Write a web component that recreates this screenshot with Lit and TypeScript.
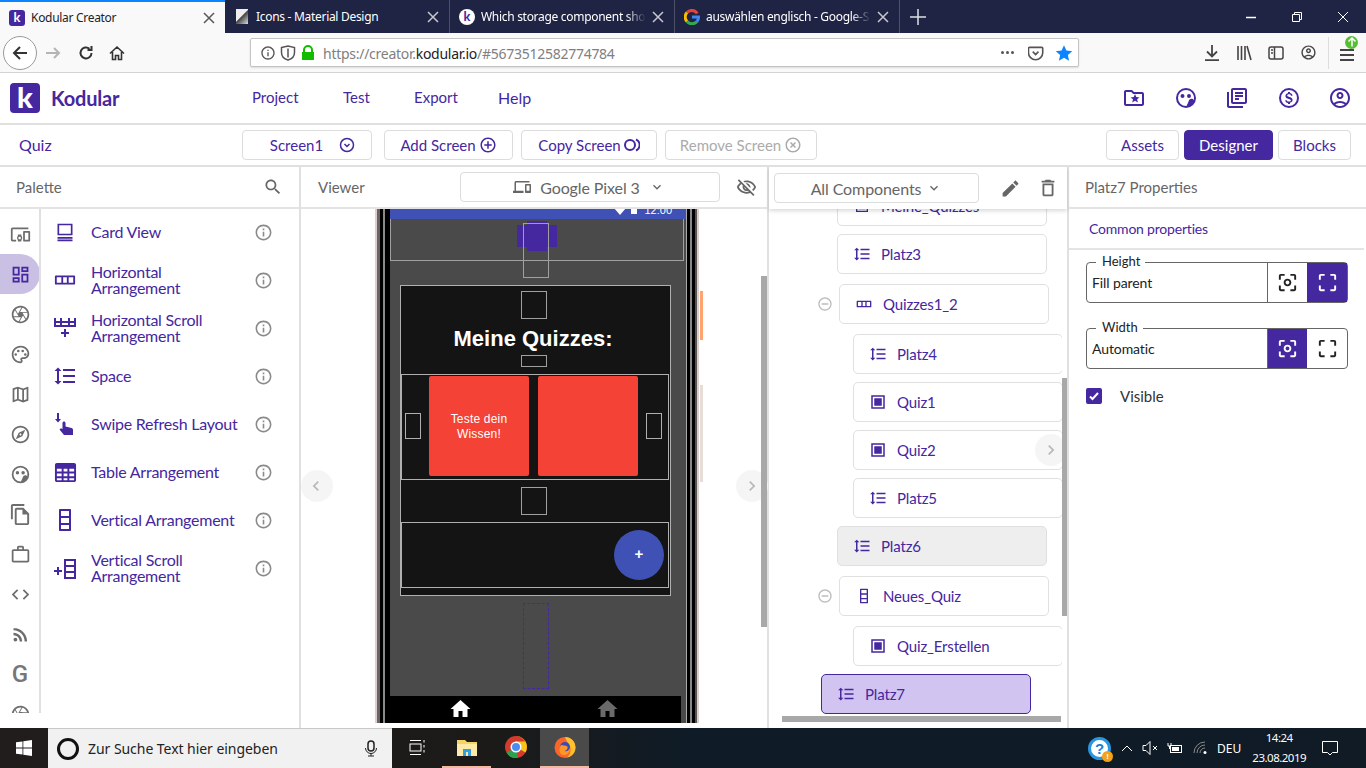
import { LitElement, html, css, svg } from "lit";
import { customElement } from "lit/decorators.js";

const P = {
  search: "M15.5 14h-.79l-.28-.27C15.41 12.59 16 11.11 16 9.5 16 5.91 13.09 3 9.5 3S3 5.91 3 9.5 5.91 16 9.5 16c1.61 0 3.09-.59 4.23-1.57l.27.28v.79l5 4.99L20.49 19l-4.99-5zm-6 0C7.01 14 5 11.99 5 9.5S7.01 5 9.5 5 14 7.01 14 9.5 11.99 14 9.5 14z",
  info: "M11 7h2v2h-2zm0 4h2v6h-2zm1-9C6.48 2 2 6.48 2 12s4.48 10 10 10 10-4.48 10-10S17.52 2 12 2zm0 18c-4.41 0-8-3.59-8-8s3.59-8 8-8 8 3.59 8 8-3.59 8-8 8z",
  edit: "M3 17.25V21h3.75L17.81 9.94l-3.75-3.75L3 17.25zM20.71 7.04c.39-.39.39-1.02 0-1.41l-2.34-2.34c-.39-.39-1.02-.39-1.41 0l-1.83 1.83 3.75 3.75 1.83-1.83z",
  trash: "M6 19c0 1.1.9 2 2 2h8c1.1 0 2-.9 2-2V7H6v12zM8 9h8v10H8V9zm7.5-5l-1-1h-5l-1 1H5v2h14V4z",
  more: "M16.59 8.59L12 13.17 7.41 8.59 6 10l6 6 6-6z",
  left: "M15.41 7.41L14 6l-6 6 6 6 1.41-1.41L10.83 12z",
  right: "M10 6L8.59 7.41 13.17 12l-4.58 4.59L10 18l6-6z",
  home: "M10 20v-6h4v6h5v-8h3L12 3 2 12h3v8z",
  account: "M12 2C6.48 2 2 6.48 2 12s4.48 10 10 10 10-4.48 10-10S17.52 2 12 2zM7.35 18.5C8.66 17.56 10.26 17 12 17s3.34.56 4.65 1.5c-1.31.94-2.91 1.5-4.65 1.5s-3.34-.56-4.65-1.5zm10.79-1.38C16.45 15.8 14.32 15 12 15s-4.45.8-6.14 2.12C4.7 15.73 4 13.95 4 12c0-4.42 3.58-8 8-8s8 3.58 8 8c0 1.95-.7 3.73-1.86 5.12zM12 6c-1.93 0-3.5 1.57-3.5 3.5S10.07 13 12 13s3.5-1.57 3.5-3.5S13.93 6 12 6zm0 5c-.83 0-1.5-.67-1.5-1.5S11.17 8 12 8s1.5.67 1.5 1.5S12.83 11 12 11z",
  folder: "M20 6h-8l-2-2H4c-1.1 0-2 .9-2 2v12c0 1.1.9 2 2 2h16c1.1 0 2-.9 2-2V8c0-1.1-.9-2-2-2zm0 12H4V6h5.17l2 2H20v10zM15.9 16.5l-.74-3.14 2.34-1.96-3.21-.28L13 8.1l-1.25 3.02-3.21.28 2.44 1.96-.74 3.14L13 14.8z",
  books: "M4 6H2v14c0 1.1.9 2 2 2h14v-2H4V6zm16-4H8c-1.1 0-2 .9-2 2v12c0 1.1.9 2 2 2h12c1.1 0 2-.9 2-2V4c0-1.1-.9-2-2-2zm0 14H8V4h12v12zM10 9h8v2h-8zm0 3h4v2h-4zm0-6h8v2h-8z",
  palette: "M12 22C6.49 22 2 17.51 2 12S6.49 2 12 2s10 4.04 10 9c0 3.31-2.69 6-6 6h-1.77c-.28 0-.5.22-.5.5 0 .12.05.23.13.33.41.47.64 1.06.64 1.67 0 1.38-1.12 2.5-2.5 2.5zm0-18c-4.41 0-8 3.59-8 8s3.59 8 8 8c.28 0 .5-.22.5-.5 0-.16-.08-.28-.14-.35-.41-.46-.63-1.05-.63-1.65 0-1.38 1.12-2.5 2.5-2.5H16c2.21 0 4-1.79 4-4 0-3.86-3.59-7-8-7zM6.5 13.5a1.5 1.5 0 1 1 0-3 1.5 1.5 0 0 1 0 3zm3-4a1.5 1.5 0 1 1 0-3 1.5 1.5 0 0 1 0 3zm5 0a1.5 1.5 0 1 1 0-3 1.5 1.5 0 0 1 0 3zm3 4a1.5 1.5 0 1 1 0-3 1.5 1.5 0 0 1 0 3z",
  map: "M20.5 3l-.16.03L15 5.1 9 3 3.36 4.9c-.21.07-.36.25-.36.48V20.5c0 .28.22.5.5.5l.16-.03L9 18.9l6 2.1 5.64-1.9c.21-.07.36-.25.36-.48V3.5c0-.28-.22-.5-.5-.5zM10 5.47l4 1.4v11.66l-4-1.4V5.47zm-5 .99l3-1.01v11.7l-3 1.16V6.46zm14 11.08l-3 1.01V6.86l3-1.16v11.84z",
  explore: "M12 2C6.48 2 2 6.48 2 12s4.48 10 10 10 10-4.48 10-10S17.52 2 12 2zm0 18c-4.41 0-8-3.59-8-8s3.59-8 8-8 8 3.59 8 8-3.59 8-8 8zm-5.5-2.5l7.51-3.49L17.5 6.5 9.99 9.99 6.5 17.5zm5.5-6.6c.61 0 1.1.49 1.1 1.1s-.49 1.1-1.1 1.1-1.1-.49-1.1-1.1.49-1.1 1.1-1.1z",
  copy: "M16 1H4c-1.1 0-2 .9-2 2v14h2V3h12V1zm-1 4H8c-1.1 0-1.99.9-1.99 2L6 21c0 1.1.89 2 1.99 2H19c1.1 0 2-.9 2-2V11l-6-6zM8 21V7h6v5h5v9H8z",
  work: "M14 6V4h-4v2h4zM4 8v11h16V8H4zm16-2c1.11 0 2 .89 2 2v11c0 1.11-.89 2-2 2H4c-1.11 0-2-.89-2-2l.01-11c0-1.11.88-2 1.99-2h4V4c0-1.11.89-2 2-2h4c1.11 0 2 .89 2 2v2h4z",
  code: "M9.4 16.6L4.8 12l4.6-4.6L8 6l-6 6 6 6 1.4-1.4zm5.2 0l4.6-4.6-4.6-4.6L16 6l6 6-6 6-1.4-1.4z",
  rss: "M8.36 17.82a2.18 2.18 0 1 1-4.36 0 2.18 2.18 0 0 1 4.36 0zM4 4.44v2.83c7.03 0 12.73 5.7 12.73 12.73h2.83c0-8.59-6.97-15.56-15.56-15.56zm0 5.66v2.83c3.9 0 7.07 3.17 7.07 7.07h2.83c0-5.47-4.43-9.9-9.9-9.9z",
  camera: "M14.25 2.26l-.08-.04-.01.02C13.46 2.09 12.74 2 12 2 6.48 2 2 6.48 2 12s4.48 10 10 10 10-4.48 10-10c0-4.75-3.31-8.72-7.75-9.74zM19.41 9h-7.99l2.71-4.7c2.4.66 4.35 2.42 5.28 4.7zM13.1 4.08L10.27 9l-1.15 2L6.4 6.3C7.84 4.88 9.82 4 12 4c.37 0 .74.03 1.1.08zM5.7 7.09L8.54 12l1.15 2H4.26C4.1 13.36 4 12.69 4 12c0-1.85.64-3.55 1.7-4.91zM4.59 15h7.98l-2.71 4.7c-2.4-.67-4.34-2.42-5.27-4.7zm6.31 4.91L14.89 13l2.72 4.7C16.160 19.120 14.180 20 12 20c-.38 0-.74-.04-1.100-.09zm7.400-3l-4-6.910h5.430c.170.640.270 1.310.270 2 0 1.850-.640 3.550-1.700 4.910z",
  other: "M3 6h18V4H3c-1.1 0-2 .9-2 2v12c0 1.1.9 2 2 2h4v-2H3V6zm10 6H9v1.78c-.61.55-1 1.33-1 2.22s.39 1.67 1 2.22V20h4v-1.78c.61-.55 1-1.34 1-2.22s-.39-1.67-1-2.22V12zm-2 5.5c-.83 0-1.5-.67-1.5-1.5s.67-1.5 1.5-1.5 1.5.67 1.5 1.5-.67 1.5-1.5 1.5zM22 8h-6c-.5 0-1 .5-1 1v10c0 .5.5 1 1 1h6c.5 0 1-.5 1-1V9c0-.5-.5-1-1-1zm-1 10h-4v-8h4v8z",
  dash: "M19 5v2h-4V5h4M9 5v6H5V5h4m10 8v6h-4v-6h4M9 17v2H5v-2h4M21 3h-8v6h8V3zM11 3H3v10h8V3zm10 8h-8v10h8V11zm-10 4H3v6h8v-6z",
  eyeOff: "M12 6c3.79 0 7.17 2.13 8.82 5.5-.59 1.22-1.42 2.27-2.41 3.12l1.41 1.41c1.39-1.23 2.49-2.77 3.18-4.53C21.27 7.11 17 4 12 4c-1.27 0-2.49.2-3.64.57l1.65 1.65C10.66 6.09 11.32 6 12 6zm-1.07 1.14L13 9.21c.57.25 1.03.71 1.28 1.28l2.07 2.07c.08-.34.14-.7.14-1.07C16.5 9.01 14.48 7 12 7c-.37 0-.72.05-1.07.14zM2.01 3.87l2.68 2.68C3.06 7.83 1.77 9.53 1 11.5 2.73 15.89 7 19 12 19c1.52 0 2.98-.29 4.32-.82l3.42 3.42 1.41-1.41L3.42 2.45 2.01 3.87zm7.5 7.5l2.61 2.61c-.04.01-.08.02-.12.02-1.38 0-2.5-1.12-2.5-2.5 0-.05.01-.08.01-.13zm-3.4-3.4l1.75 1.75c-.23.55-.36 1.15-.36 1.78 0 2.48 2.02 4.5 4.5 4.5.63 0 1.23-.13 1.77-.36l.98.98c-.88.24-1.8.38-2.75.38-3.79 0-7.17-2.13-8.82-5.5.7-1.43 1.72-2.61 2.93-3.53z",
  devices: "M4 6h18V4H4c-1.1 0-2 .9-2 2v11H0v3h14v-3H4V6zm19 2h-6c-.55 0-1 .45-1 1v10c0 .55.45 1 1 1h6c.55 0 1-.45 1-1V9c0-.55-.45-1-1-1zm-1 9h-4v-7h4v7z",
  focus: "M5 15H3v4c0 1.1.9 2 2 2h4v-2H5v-4zM5 5h4V3H5c-1.1 0-2 .9-2 2v4h2V5zm14-2h-4v2h4v4h2V5c0-1.1-.9-2-2-2zm0 16h-4v2h4c1.1 0 2-.9 2-2v-4h-2v4zM12 8c-2.21 0-4 1.79-4 4s1.79 4 4 4 4-1.79 4-4-1.79-4-4-4zm0 6c-1.1 0-2-.9-2-2s.9-2 2-2 2 .9 2 2-.9 2-2 2z",
  full: "M5 15H3v4c0 1.1.9 2 2 2h4v-2H5v-4zM5 5h4V3H5c-1.1 0-2 .9-2 2v4h2V5zm14-2h-4v2h4v4h2V5c0-1.1-.9-2-2-2zm0 16h-4v2h4c1.1 0 2-.9 2-2v-4h-2v4z",
  addCircle: "M13 7h-2v4H7v2h4v4h2v-4h4v-2h-4V7zm-1-5C6.48 2 2 6.48 2 12s4.48 10 10 10 10-4.48 10-10S17.52 2 12 2zm0 18c-4.41 0-8-3.59-8-8s3.59-8 8-8 8 3.59 8 8-3.59 8-8 8z",
  xCircle: "M14.59 8L12 10.59 9.41 8 8 9.41 10.59 12 8 14.59 9.41 16 12 13.41 14.59 16 16 14.59 13.41 12 16 9.41 14.59 8zM12 2C6.47 2 2 6.47 2 12s4.47 10 10 10 10-4.47 10-10S17.53 2 12 2zm0 18c-4.41 0-8-3.59-8-8s3.59-8 8-8 8 3.59 8 8-3.59 8-8 8z",
  minusCircle: "M7 11v2h10v-2H7zm5-9C6.48 2 2 6.48 2 12s4.48 10 10 10 10-4.48 10-10S17.52 2 12 2zm0 18c-4.41 0-8-3.59-8-8s3.59-8 8-8 8 3.59 8 8-3.59 8-8 8z",
  space: "M6 7h2.5L5 3.5 1.5 7H4v10H1.5L5 20.5 8.5 17H6V7zm4-2v2h12V5H10zm0 14h12v-2H10v2zm0-6h12v-2H10v2z",
  card: "M3 2h18v14H3V2zm2 2v10h14V4H5zM3 18h18v2H3v-2zm0 3h18v2H3v-2z",
  horiz: "M2 7h20c.6 0 1 .4 1 1v8c0 .6-.4 1-1 1H2c-.6 0-1-.4-1-1V8c0-.6.4-1 1-1zm1 2v6h5V9H3zm7 0v6h4V9h-4zm6 0v6h5V9h-5z",
  hscroll: "M1 2h2v3h4V2h2v3h6V2h2v3h4V2h2v9H1V2zm2 5v2h4V7H3zm6 0v2h6V7H9zm8 0v2h4V7h-4zM11 13h2v3h3v2h-3v3h-2v-3H8v-2h3v-3z",
  swipe: "M4 1h2v6h2l-3 3.4L2 7h2V1zM11 9.5c.8 0 1.5.7 1.5 1.5v3.4l6 1.6c1 .3 1.5 1 1.5 2v5h-9L6.500 17.500l1.400-1.300L9.500 17V11c0-.8.700-1.500 1.500-1.500z",
  table: "M3 2h18c1.100 0 2 .9 2 2v16c0 1.100-.9 2-2 2H3c-1.100 0-2-.9-2-2V4c0-1.100.9-2 2-2zm0 6v3h5V8H3zm7 0v3h4V8h-4zm6 0v3h5V8h-5zM3 13v3h5v-3H3zm7 0v3h4v-3h-4zm6 0v3h5v-3h-5zM3 18v2h5v-2H3zm7 0v2h4v-2h-4zm6 0v2h5v-2h-5z",
  vert: "M7 1h10c.6 0 1 .4 1 1v20c0 .6-.4 1-1 1H7c-.6 0-1-.4-1-1V2c0-.6.4-1 1-1zm1 2v5h8V3H8zm0 7v5h8v-5H8zm0 7v4h8v-4H8z",
  vscroll: "M11 3h12v20H11V3zm2 2v4h8V5h-8zm0 6v4h8v-4h-8zm0 6v4h8v-4h-8zM4 11h2v3h3v2H6v3H4v-3H1v-2h3v-3z",
  button: "M3 3h18v18H3V3zm2 2v14h14V5H5zm2 2h10v10H7V7z",
  face: "M12 2a10 10 0 1 0 0 20 10 10 0 0 0 0-20zm0 2a8 8 0 0 1 7.700 10.200c-.4-.900-1.300-1.400-2.200-1.400-1.300 0-2.300.9-2.700 2-.5 1.500-1.300 3.200-2.300 5.100-.2 0-.3.100-.5.100a8 8 0 0 1 0-16zM8.500 8a2 2 0 1 0 0 4 2 2 0 0 0 0-4zm6.500 0a2 2 0 1 0 0 4 2 2 0 0 0 0-4z",
  dollarCircle: "M12 2a10 10 0 1 0 0 20 10 10 0 0 0 0-20zm0 2a8 8 0 1 1 0 16 8 8 0 0 1 0-16zm-1 2v1.300c-1.500.3-2.600 1.300-2.600 2.700 0 1.700 1.400 2.400 3.300 2.900 1.700.4 2.100.9 2.100 1.500 0 .5-.4 1.200-1.900 1.200-1.400 0-2-.6-2.100-1.400H8.200c.1 1.600 1.200 2.500 2.800 2.800V18h2v-1.300c1.500-.3 2.600-1.100 2.600-2.600 0-2-1.700-2.700-3.300-3.100-1.600-.4-2.100-.8-2.100-1.400 0-.7.700-1.300 1.900-1.300 1.300 0 1.700.6 1.800 1.400h1.600c-.1-1.200-.8-2.300-2.500-2.700V6h-2z",
};

const ic = (d: string, size = 24, cls = "") =>
  html`<svg class=${cls} width=${size} height=${size} viewBox="0 0 24 24" fill="currentColor"><path d=${d}></path></svg>`;

const strokeIc = (body: unknown, w: number, h: number, cls = "") =>
  html`<svg class=${cls} width=${w} height=${h} viewBox="0 0 ${w} ${h}" fill="none" stroke="currentColor" stroke-width="1.500">${body}</svg>`;

const RAIL = [P.other, P.dash, P.camera, P.palette, P.map, P.explore, P.face, P.copy, P.work, P.code, P.rss];

const PALETTE = [
  { icon: P.card, size: 20, label: ["Card View"] },
  { icon: P.horiz, size: 22, label: ["Horizontal", "Arrangement"] },
  { icon: P.hscroll, size: 24, label: ["Horizontal Scroll", "Arrangement"] },
  { icon: P.space, size: 24, label: ["Space"] },
  { icon: P.swipe, size: 24, label: ["Swipe Refresh Layout"] },
  { icon: P.table, size: 23, label: ["Table Arrangement"] },
  { icon: P.vert, size: 24, label: ["Vertical Arrangement"] },
  { icon: P.vscroll, size: 24, label: ["Vertical Scroll", "Arrangement"] },
];

const TREE = [
  { name: "Meine_Quizzes", icon: P.button, lv: "l1", icSize: 16 },
  { name: "Platz3", icon: P.space, lv: "l1", icSize: 18 },
  { name: "Quizzes1_2", icon: P.horiz, lv: "head", icSize: 16 },
  { name: "Platz4", icon: P.space, lv: "l2", icSize: 18 },
  { name: "Quiz1", icon: P.button, lv: "l2", icSize: 18 },
  { name: "Quiz2", icon: P.button, lv: "l2", icSize: 18 },
  { name: "Platz5", icon: P.space, lv: "l2", icSize: 18 },
  { name: "Platz6", icon: P.space, lv: "l1 hover", icSize: 18 },
  { name: "Neues_Quiz", icon: P.vert, lv: "head", icSize: 16 },
  { name: "Quiz_Erstellen", icon: P.button, lv: "l2", icSize: 18 },
  { name: "Platz7", icon: P.space, lv: "l0 picked", icSize: 18 },
];

@customElement("app-root")
export class AppRoot extends LitElement {
  private tabs() {
    const tabs = [
      { title: "Kodular Creator", fav: html`<span class="fav-k">k</span>`, on: true },
      { title: "Icons - Material Design", fav: html`<span class="fav-md"></span>` },
      { title: "Which storage component sho", fav: html`<span class="fav-k round">k</span>` },
      {
        title: "auswählen englisch - Google-S",
        fav: html`<svg width="16" height="16" viewBox="0 0 16 16" fill="none" stroke-width="3" class="fav-g">
          <path d="M13.200 4.500A6.500 6.500 0 0 0 3 3.500" stroke="#ea4335"></path>
          <path d="M3 3.500a6.500 6.500 0 0 0 0 9" stroke="#fbbc05"></path>
          <path d="M3 12.500a6.500 6.500 0 0 0 10 0" stroke="#34a853"></path>
          <path d="M13 12.500A6.500 6.500 0 0 0 14.500 8H8" stroke="#4285f4"></path>
        </svg>`,
      },
    ];
    return html`<div class="tabs">
      ${tabs.map(
        (t) => html`<div class="tab ${t.on ? "on" : ""}">
          ${t.fav}<span class="tab-title">${t.title}</span>
          ${strokeIc(svg`<path d="M1 1l10 10M11 1L1 11"></path>`, 12, 12)}
        </div>`
      )}
      <div class="new-tab">${strokeIc(svg`<path d="M8 0v16M0 8h16"></path>`, 16, 16)}</div>
      <div class="win">
        ${strokeIc(svg`<path d="M0 5.500h10"></path>`, 10, 10)}
        ${strokeIc(svg`<path d="M.5 2.500h7v7h-7zM2.500 2.500V.5h7v7H7.500" stroke-width="1"></path>`, 10, 10)}
        ${strokeIc(svg`<path d="M0 0l10 10M10 0L0 10" stroke-width="1"></path>`, 10, 10)}
      </div>
    </div>`;
  }

  private toolbar() {
    return html`<div class="toolbar">
      <div class="back">${strokeIc(svg`<path d="M15 8H2M8 2L2 8l6 6" stroke-width="2"></path>`, 16, 16)}</div>
      ${strokeIc(svg`<path d="M1 8h13M9 3l5 5-5 5" stroke-width="2"></path>`, 16, 16, "fwd")}
      ${strokeIc(svg`<path d="M13.500 8A5.500 5.500 0 1 1 11.500 3.700M13.500 1v4h-4" stroke-width="2"></path>`, 16, 16, "tb-ic reload")}
      ${strokeIc(svg`<path d="M1 8.500L8 2l7 6.500M3.500 7v7.500h3v-4h3v4h3V7" stroke-width="1.600"></path>`, 16, 16, "tb-ic homeb")}
      <div class="url">
        ${ic(P.info, 16, "u-info")}
        ${strokeIc(svg`<path d="M1.500 2.500L8 1l6.500 1.500v5C14.500 11 12 14 8 15c-4-1-6.500-4-6.500-7.500zM8 3.500v9" stroke-width="1.500"></path>`, 16, 16, "u-shield")}
        <svg class="u-lock" width="14" height="16" viewBox="0 0 14 16" fill="#12bc00"><path d="M2 7V5a5 5 0 0 1 10 0v2h1v8H1V7h1zm2 0h6V5a3 3 0 0 0-6 0v2z"></path></svg>
        <span class="url-text">https://creator.<b>kodular.io</b>/#5673512582774784</span>
        <span class="u-dots"><i></i><i></i><i></i></span>
        ${strokeIc(svg`<path d="M1.500 2h13c.5 0 1 .4 1 1v4.500a7.500 7.500 0 0 1-15 0V3c0-.6.5-1 1-1zM5 6.500l3 3 3-3" stroke-width="1.700" transform="translate(0 .5) scale(.95)"></path>`, 16, 16, "u-pocket")}
        <svg class="u-star" width="18" height="18" viewBox="0 0 24 24" fill="#0a84ff"><path d="M12 1.500l3.200 7.200 7.800.8-5.900 5.200 1.700 7.700L12 18.400l-6.800 4 1.700-7.700L1 9.500l7.800-.8z"></path></svg>
      </div>
      <div class="tb-right">
        ${strokeIc(svg`<path d="M8 0v11M3 6.500L8 11.500 13 6.500M1 15.200h14" stroke-width="1.800"></path>`, 16, 16)}
        ${strokeIc(svg`<path d="M2 1v14M5.500 1v14M9 1v14M11 1l4 14" stroke-width="1.600"></path>`, 16, 16)}
        ${strokeIc(svg`<rect x="1" y="2" width="14" height="12" rx="2"></rect><path d="M6.500 2v12M3 5h2M3 8h2" stroke-width="1.500"></path>`, 16, 16)}
        ${ic(P.account, 17)}
        <span class="tb-sep"></span>
        <span class="menu">
          ${strokeIc(svg`<path d="M1 3h14M1 8h14M1 13h14" stroke-width="1.800"></path>`, 16, 16)}
          <span class="badge">
            <svg width="10" height="10" viewBox="0 0 10 10" fill="none" stroke="#fff" stroke-width="1.500"><path d="M5 9.500V1M1.500 4.500L5 1l3.500 3.500"></path></svg>
          </span>
        </span>
      </div>
    </div>`;
  }

  private appHeader() {
    return html`<header class="app-head">
      <div class="logo">k</div>
      <div class="brand">Kodular</div>
      <nav class="nav">
        <span class="n1">Project</span><span class="n2">Test</span><span class="n3">Export</span><span class="n4">Help</span>
      </nav>
      <div class="head-icons">
        ${ic(P.folder, 24)} ${ic(P.face, 24)} ${ic(P.books, 24)} ${ic(P.dollarCircle, 24)} ${ic(P.account, 24)}
      </div>
    </header>`;
  }

  private subBar() {
    return html`<div class="sub">
      <span class="proj">Quiz</span>
      <button class="btn b-screen">
        Screen1
        ${strokeIc(svg`<circle cx="8" cy="8" r="6.500"></circle><path d="M5.500 7l2.500 2.500L10.500 7"></path>`, 16, 16)}
      </button>
      <button class="btn b-add">Add Screen ${ic(P.addCircle, 18)}</button>
      <button class="btn b-copy">
        Copy Screen
        ${strokeIc(svg`<circle cx="6" cy="8" r="5" stroke-width="2"></circle><path d="M12 2.500a6 6 0 0 1 0 11" stroke-width="2"></path>`, 16, 16)}
      </button>
      <button class="btn b-remove">Remove Screen ${ic(P.xCircle, 18)}</button>
      <span class="views">
        <button class="btn v1">Assets</button>
        <button class="btn v2">Designer</button>
        <button class="btn v3">Blocks</button>
      </span>
    </div>`;
  }

  private palette() {
    return html`<section class="palette">
      <div class="p-head">Palette ${ic(P.search, 20)}</div>
      <div class="p-body">
        <div class="rail">
          ${RAIL.map(
            (d, i) => html`<div class="rail-item ${i === 1 ? "on" : ""}">${ic(d, i === 7 ? 23 : 21)}</div>`
          )}
          <div class="rail-item g">G</div>
          <div class="rail-item">${ic(P.camera, 21)}</div>
        </div>
        <div class="plist">
          ${PALETTE.map(
            (p) => html`<div class="pitem">
              <span class="pi">${ic(p.icon, p.size)}</span>
              <span class="pl">${p.label.map((l) => html`<span>${l}</span>`)}</span>
              ${ic(P.info, 19, "pinfo")}
            </div>`
          )}
        </div>
      </div>
    </section>`;
  }

  private phone() {
    const homeIcon = (cls: string) => ic(P.home, 24, cls);
    return html`<div class="phone">
      <span class="side s1"></span><span class="side s2"></span>
      <div class="screen">
        <div class="status">
          <svg width="12" height="7" viewBox="0 0 12 7" fill="#fff"><path d="M0 0h12L6 7z"></path></svg>
          <span class="batt"></span>
          <span class="clock">12:00</span>
        </div>
        <div class="top-box">
          <span class="mk-wing"></span><span class="mk-body"></span><span class="mk-outline"></span>
        </div>
        <div class="main">
          <div class="hold h28"></div>
          <div class="title">Meine Quizzes:</div>
          <div class="hold h12"></div>
          <div class="row row1">
            <span class="sbox"></span>
            <div class="qcard">Teste dein<br />Wissen!</div>
            <div class="qcard c2"></div>
            <span class="sbox"></span>
          </div>
          <div class="hold h28 gap"></div>
          <div class="row row2"><div class="fab">+</div></div>
        </div>
        <div class="dashed"></div>
        <div class="bottom-nav">${homeIcon("hw")}${homeIcon("hg")}</div>
      </div>
    </div>`;
  }

  private viewer() {
    return html`<section class="viewer">
      <div class="v-head">
        <span class="ptitle">Viewer</span>
        <div class="select device">${ic(P.devices, 18)}<span>Google Pixel 3</span>${ic(P.more, 16)}</div>
        ${ic(P.eyeOff, 21, "eye")}
      </div>
      <div class="v-body">
        ${this.phone()}
        <div class="arrow a-l">${ic(P.left, 20)}</div>
        <div class="arrow a-r">${ic(P.right, 20)}</div>
        <div class="vbar"></div>
      </div>
    </section>`;
  }

  private tree() {
    return html`<section class="tree">
      <div class="t-head">
        <div class="select all"><span>All Components</span>${ic(P.more, 16)}</div>
        ${ic(P.edit, 21, "t-edit")} ${ic(P.trash, 22, "t-del")}
      </div>
      <div class="t-body">
        <div class="t-list">
          ${TREE.map(
            (n) => html`<div class="node ${n.lv}">
              ${n.lv === "head" ? ic(P.minusCircle, 16, "collapse") : ""}
              <span class="nic">${ic(n.icon, n.icSize)}</span><span>${n.name}</span>
            </div>`
          )}
        </div>
        <div class="arrow a-t">${ic(P.right, 20)}</div>
        <div class="tbar-v"></div>
        <div class="tbar-h"></div>
      </div>
    </section>`;
  }

  private props() {
    const field = (label: string, value: string, active: number) => html`<div class="field">
      <span class="legend">${label}</span>
      <span class="fval">${value}</span>
      <span class="fbtn first ${active === 0 ? "active" : ""}">${ic(P.focus, 23)}</span>
      <span class="fbtn ${active === 1 ? "active" : ""}">${ic(P.full, 23)}</span>
    </div>`;
    return html`<section class="props">
      <div class="pr-head">Platz7 Properties</div>
      <div class="pr-tab">Common properties</div>
      <div class="pr-body">
        ${field("Height", "Fill parent", 1)} ${field("Width", "Automatic", 0)}
        <label class="check">
          <span class="box">
            <svg width="12" height="12" viewBox="0 0 12 12" fill="none" stroke="#fff" stroke-width="2"><path d="M2 6.500l2.500 2.500L10 3"></path></svg>
          </span>
          Visible
        </label>
      </div>
    </section>`;
  }

  private taskbar() {
    return html`<footer class="taskbar">
      <div class="start">
        <svg width="16" height="16" viewBox="0 0 16 16" fill="#fff"><path d="M0 2.300l6.500-.9v6.200H0zM7.300 1.300L16 0v7.600H7.300zM0 8.400h6.500v6.200L0 13.700zM7.300 8.400H16V16l-8.700-1.300z"></path></svg>
      </div>
      <div class="tsearch">
        <span class="cortana"></span>
        <span class="ts-text">Zur Suche Text hier eingeben</span>
        ${strokeIc(svg`<rect x="5" y="1" width="6" height="10" rx="3"></rect><path d="M2.500 8a5.500 5.500 0 0 0 11 0M8 13.500V16M5 16h6" stroke-width="1"></path>`, 16, 17, "mic")}
      </div>
      <div class="apps">
        <span class="app taskview">
          ${strokeIc(svg`<rect x="2" y="5" width="11" height="7" stroke-width="1"></rect><path d="M2 1.500h11M2 15.500h11M16 1v2.500M16 6v2.500M16 11v2.500" stroke-width="1"></path>`, 18, 17)}
        </span>
        <span class="app run">
          <svg width="22" height="20" viewBox="0 0 22 20">
            <path d="M1 3h8l2 2h10v14H1z" fill="#f6d365"></path>
            <path d="M1 7h20v12H1z" fill="#ffe9a8"></path>
            <path d="M7 12h8v7H7z" fill="#2f9fe0"></path>
            <path d="M10 15h2v4h-2z" fill="#ffe9a8"></path>
          </svg>
        </span>
        <span class="app">
          <svg width="24" height="24" viewBox="0 0 24 24">
            <circle cx="12" cy="12" r="11" fill="#d33b2c"></circle>
            <path d="M12 12L2.500 17.500A11 11 0 0 0 14 22.800z" fill="#2e9e4f"></path>
            <path d="M12 1a11 11 0 0 1 9.500 16.500L12 12V6.500h9A11 11 0 0 0 12 1z" fill="#f5c518"></path>
            <circle cx="12" cy="12" r="5.500" fill="#fff"></circle>
            <circle cx="12" cy="12" r="4" fill="#4a8df0"></circle>
          </svg>
        </span>
        <span class="app ff run">
          <svg width="24" height="24" viewBox="0 0 24 24">
            <circle cx="12" cy="12.500" r="10.500" fill="#f8662c"></circle>
            <path d="M12 2c6 0 10.500 4.500 10.500 10.500 0 5-3.500 9-8.500 10C18 19 19 13 15.500 9 14.500 7 13 5 12 2z" fill="#ffc12e"></path>
            <circle cx="12" cy="12" r="5" fill="#3a4cb8"></circle>
            <path d="M8 10c2 .5 4 0 6.500 1.500.5 2.500-1 4-3 4.500 2.500 1 5-1 5.500-3 .5 4-3 7.500-6.500 7C7 19.500 5 15 8 10z" fill="#ff9628"></path>
          </svg>
        </span>
      </div>
      <div class="tray">
        <span class="help">?<i>!</i></span>
        ${strokeIc(svg`<path d="M1 8l5-5 5 5" stroke-width="1"></path>`, 12, 10, "t1")}
        ${strokeIc(svg`<path d="M1 5.500h3l4-4v13l-4-4H1zM11 6l4 4M15 6l-4 4" stroke-width="1"></path>`, 16, 16, "t2")}
        <svg class="t3" width="16" height="12" viewBox="0 0 16 12" fill="none" stroke="#fff"><rect x="3.500" y="3.500" width="11" height="7"></rect><rect x="5" y="5" width="7" height="4" fill="#fff" stroke="none"></rect><path d="M1 1v3h3V1M2.500 4v3"></path></svg>
        <svg class="t4" width="16" height="14" viewBox="0 0 16 14" fill="none" stroke="#8a8a8a"><path d="M1 12a11 11 0 0 1 11-11M4 12a8 8 0 0 1 8-8M7 12a5 5 0 0 1 5-5"></path><circle cx="12" cy="11.500" r="1.500" fill="#fff" stroke="none"></circle></svg>
        <span class="lang">DEU</span>
        <span class="time">14:24<br />23.08.2019</span>
        ${strokeIc(svg`<path d="M.5 1.500h15v11h-5L8 15l-2.500-2.500h-5z" stroke-width="1"></path>`, 16, 16, "t5")}
      </div>
    </footer>`;
  }

  render() {
    return html`
      ${this.tabs()} ${this.toolbar()} ${this.appHeader()} ${this.subBar()}
      <main class="panels">${this.palette()} ${this.viewer()} ${this.tree()} ${this.props()}</main>
      ${this.taskbar()}
    `;
  }

  static styles = css`
    :host {
      display: flex;
      flex-direction: column;
      width: 1366px;
      height: 768px;
      overflow: hidden;
      background: #fff;
      font-family: "Lato", "Liberation Sans", sans-serif;
      color: #4527a0;
    }
    * {
      box-sizing: border-box;
    }
    svg {
      flex: none;
      display: block;
    }
    button {
      font: inherit;
    }

    .tabs {
      height: 33px;
      flex: none;
      display: flex;
      background: #1f2344;
      font-family: "Noto Sans", sans-serif;
      font-size: 12px;
      color: #fff;
    }
    .tab {
      width: 225px;
      display: flex;
      align-items: center;
      gap: 6px;
      padding: 0 10px 0 9px;
      border-right: 1px solid #4c5068;
    }
    .tab svg:last-child {
      opacity: 0.75;
      margin-left: auto;
    }
    .tab.on {
      background: #f9f9fa;
      color: #222;
      border-top: 2px solid #0a84ff;
      border-right: 0;
    }
    .tab-title {
      flex: 1;
      white-space: nowrap;
      overflow: hidden;
      letter-spacing: -0.3px;
      -webkit-mask-image: linear-gradient(90deg, #000 88%, transparent);
      mask-image: linear-gradient(90deg, #000 88%, transparent);
    }
    .tab:nth-child(1) .tab-title,
    .tab:nth-child(2) .tab-title {
      -webkit-mask-image: none;
      mask-image: none;
    }
    .fav-k {
      width: 16px;
      height: 16px;
      flex: none;
      border-radius: 3px;
      background: #4527a0;
      color: #fff;
      font: 700 13px/15px "Lato", sans-serif;
      text-align: center;
    }
    .fav-k.round {
      border-radius: 50%;
      background: #fff;
      color: #4527a0;
    }
    .fav-md {
      width: 12px;
      height: 15px;
      flex: none;
      margin: 0 2px;
      background: linear-gradient(135deg, #eee 45%, #444 50%, #ddd);
    }
    .new-tab {
      width: 36px;
      display: flex;
      align-items: center;
      justify-content: center;
      opacity: 0.85;
    }
    .win {
      margin-left: auto;
      display: flex;
      align-items: center;
    }
    .win svg {
      margin: 0 18px;
    }

    .toolbar {
      height: 40px;
      flex: none;
      display: flex;
      align-items: center;
      background: #f9f9fa;
      border-bottom: 1px solid #d4d4d4;
      color: #333;
      padding-left: 3px;
    }
    .back {
      width: 34px;
      height: 34px;
      border: 1px solid #9a9a9a;
      border-radius: 50%;
      display: flex;
      align-items: center;
      justify-content: center;
      background: #fff;
    }
    .fwd {
      margin-left: 8px;
      color: #b5b5b5;
    }
    .reload {
      margin-left: 17px;
    }
    .homeb {
      margin-left: 15px;
    }
    .url {
      margin-left: 125px;
      width: 829px;
      height: 29px;
      background: #fff;
      border: 1px solid #c4c4c4;
      border-radius: 2px;
      box-shadow: 0 1px 2px rgba(0, 0, 0, 0.12);
      display: flex;
      align-items: center;
      padding-left: 9px;
      color: #555;
    }
    .u-shield {
      margin-left: 4px;
    }
    .u-lock {
      margin-left: 5px;
    }
    .url-text {
      margin-left: 8px;
      padding-top: 2px;
      font: 14px "Noto Sans", sans-serif;
      letter-spacing: -0.27px;
      color: #808080;
      white-space: nowrap;
    }
    .url-text b {
      color: #222;
      font-weight: 400;
    }
    .u-dots {
      margin-left: auto;
      display: flex;
      gap: 2px;
    }
    .u-dots i {
      width: 3px;
      height: 3px;
      border-radius: 50%;
      background: #555;
    }
    .u-pocket {
      margin-left: 14px;
    }
    .u-star {
      margin: 0 5px 0 11px;
    }
    .tb-right {
      display: flex;
      align-items: center;
      gap: 16px;
      margin-left: 125px;
      color: #444;
    }
    .tb-sep {
      width: 1px;
      height: 32px;
      background: #ddd;
      margin: 0 -6px 0 -5px;
    }
    .menu {
      position: relative;
      top: 2px;
    }
    .badge {
      position: absolute;
      top: -11px;
      left: 6px;
      width: 13px;
      height: 13px;
      border-radius: 50%;
      background: #57bd35;
      display: flex;
      align-items: center;
      justify-content: center;
    }

    .app-head {
      height: 52px;
      flex: none;
      display: flex;
      align-items: center;
      border-bottom: 2px solid #e0e0e0;
      padding: 0 14px 0 10px;
    }
    .logo {
      width: 30px;
      height: 30px;
      border-radius: 4px;
      background: #4527a0;
      color: #fff;
      font: 900 29px/28px "Lato", sans-serif;
      text-align: center;
    }
    .brand {
      width: 201px;
      margin-left: 11px;
      font-size: 20px;
      font-weight: 700;
      letter-spacing: -0.2px;
    }
    .nav {
      display: flex;
      font-size: 15px;
      padding-bottom: 1px;
    }
    .nav span {
      white-space: nowrap;
    }
    .n1 {
      width: 91px;
    }
    .n2 {
      width: 71px;
    }
    .n3 {
      width: 84px;
    }
    .n4 {
      font-size: 16px;
    }
    .head-icons {
      margin-left: auto;
      display: flex;
      gap: 27.500px;
    }

    .sub {
      height: 42px;
      flex: none;
      display: flex;
      align-items: center;
      border-bottom: 2px solid #e0e0e0;
      padding-left: 19px;
      font-size: 16px;
    }
    .proj {
      width: 223px;
      padding-bottom: 1px;
    }
    .btn {
      height: 30px;
      display: flex;
      align-items: center;
      justify-content: center;
      gap: 3px;
      padding: 0;
      background: #fff;
      color: #4527a0;
      border: 1px solid #dcdcdc;
      border-radius: 4px;
      white-space: nowrap;
      font-size: 15px;
    }
    .b-screen {
      width: 130px;
      gap: 16px;
      padding-left: 11px;
    }
    .b-add {
      width: 129px;
      margin-left: 12px;
    }
    .b-copy {
      width: 136px;
      margin-left: 8px;
    }
    .b-remove {
      width: 152px;
      margin-left: 8px;
      color: #ababab;
    }
    .views {
      display: flex;
      gap: 5px;
      margin-left: 289px;
    }
    .v1 {
      width: 73px;
    }
    .v2 {
      width: 89px;
      background: #4527a0;
      color: #fff;
      border-color: #4527a0;
    }
    .v3 {
      width: 73px;
    }

    .panels {
      height: 561px;
      flex: none;
      display: flex;
      overflow: hidden;
    }
    .p-head,
    .v-head,
    .t-head,
    .pr-head {
      height: 42px;
      flex: none;
      display: flex;
      align-items: center;
      font-size: 15px;
      color: #666;
      border-bottom: 2px solid #e4e4e4;
    }

    .palette {
      width: 301px;
      display: flex;
      flex-direction: column;
      border-right: 2px solid #e0e0e0;
    }
    .p-head {
      justify-content: space-between;
      padding: 0 16px;
    }
    .p-body {
      flex: 1;
      display: flex;
      min-height: 0;
    }
    .rail {
      width: 41px;
      height: 504px;
      flex: none;
      overflow: hidden;
      border-right: 2px solid #e0e0e0;
      padding-top: 5px;
      color: #6d6d6d;
    }
    .rail-item {
      height: 40px;
      width: 40px;
      display: flex;
      align-items: center;
      justify-content: center;
    }
    .rail-item.on {
      background: #c9c0e4;
      color: #4527a0;
      border-radius: 0 20px 20px 0;
    }
    .rail-item.g {
      font: 500 24px Roboto, sans-serif;
      color: #777;
    }
    .plist {
      flex: 1;
      margin-top: -1px;
    }
    .pitem {
      height: 48px;
      display: flex;
      align-items: center;
    }
    .pi {
      width: 48px;
      margin-right: 2px;
      display: flex;
      justify-content: center;
    }
    .pl {
      width: 163px;
      display: flex;
      flex-direction: column;
      font-size: 16px;
      line-height: 16px;
      white-space: nowrap;
      letter-spacing: -0.25px;
    }
    .pinfo {
      color: #8a8a8a;
    }

    .viewer {
      width: 468px;
      display: flex;
      flex-direction: column;
      border-right: 2px solid #e0e0e0;
    }
    .v-head {
      padding-left: 17px;
    }
    .ptitle {
      width: 142px;
    }
    .select {
      width: 260px;
      height: 30px;
      display: flex;
      align-items: center;
      justify-content: center;
      gap: 8px;
      border: 1px solid #dcdcdc;
      border-radius: 4px;
      color: #666;
      font-size: 16px;
      letter-spacing: -0.1px;
    }
    .select.device {
      gap: 9px;
      padding-right: 2px;
    }
    .eye {
      margin-left: 16px;
      color: #666;
    }
    .v-body {
      flex: 1;
      position: relative;
      padding-left: 74px;
      min-height: 0;
    }
    .phone {
      position: relative;
      width: 324px;
      height: 514px;
      padding: 0 13px 0 15px;
      background: linear-gradient(
        90deg,
        #decfca 0 2px,
        #666 2px 5px,
        #000 5px 8px,
        #8a8a8a 8px 10px,
        #000 10px 311px,
        #aaa 311px 312px,
        #000 312px 315px,
        #888 315px 317px,
        #000 317px 320px,
        #555 320px 322px,
        #decfca 322px 324px
      );
    }
    .side {
      position: absolute;
      left: 325px;
      width: 3px;
    }
    .s1 {
      top: 82px;
      height: 49px;
      background: #ffa36f;
    }
    .s2 {
      top: 176px;
      height: 97px;
      background: #e8dcd8;
    }
    .screen {
      height: 100%;
      background: #4a4a4a;
      display: flex;
      flex-direction: column;
      position: relative;
    }
    .status {
      height: 10px;
      flex: none;
      background: #3f51b5;
      display: flex;
      justify-content: flex-end;
      overflow: hidden;
      color: #fff;
      font: 11px/2px "Liberation Sans", sans-serif;
      padding-right: 14px;
    }
    .status svg {
      margin: -1px 5px 0 0;
    }
    .batt {
      width: 6px;
      height: 5px;
      background: #fff;
      margin-right: 7px;
    }
    .clock {
      height: 10px;
    }
    .top-box {
      position: relative;
      height: 42px;
      flex: none;
      width: 294px;
      border: 1px solid #a0a0a0;
      border-top: 0;
    }
    .mk-wing {
      position: absolute;
      left: 126px;
      top: 6px;
      width: 40px;
      height: 22px;
      background: #4527a0;
    }
    .mk-body {
      position: absolute;
      left: 136px;
      top: 2px;
      width: 20px;
      height: 30px;
      background: #4527a0;
    }
    .mk-outline {
      position: absolute;
      left: 132px;
      top: 4px;
      width: 26px;
      height: 55px;
      border: 1px solid #a0a0a0;
    }
    .main {
      width: 271px;
      height: 311px;
      flex: none;
      margin: 24px 0 0 10px;
      background: #141414;
      border: 1px solid #b0b0b0;
      padding-top: 5px;
      display: flex;
      flex-direction: column;
    }
    .hold {
      width: 26px;
      margin-left: 120px;
      border: 1px solid #a0a0a0;
      flex: none;
    }
    .h28 {
      height: 28px;
    }
    .h12 {
      height: 12px;
    }
    .gap {
      margin-top: 7px;
    }
    .title {
      height: 36px;
      flex: none;
      display: flex;
      align-items: center;
      justify-content: center;
      font: 700 22px "Liberation Sans", sans-serif;
      color: #fff;
      padding-right: 5px;
      padding-top: 4px;
    }
    .row {
      width: 268px;
      display: flex;
      align-items: center;
      flex: none;
      border: 1px solid #b0b0b0;
    }
    .row1 {
      height: 106px;
      margin-top: 7px;
      gap: 8px;
      padding: 0 0 2px 3px;
    }
    .sbox {
      width: 16px;
      height: 26px;
      border: 1px solid #b0b0b0;
    }
    .qcard {
      width: 100px;
      height: 100px;
      background: #f44336;
      border-radius: 2px;
      color: #fff;
      font: 12px/15px "Liberation Sans", sans-serif;
      letter-spacing: 0.2px;
      text-align: center;
      padding-top: 2px;
      display: flex;
      align-items: center;
      justify-content: center;
    }
    .qcard.c2 {
      margin-left: 1px;
    }
    .row2 {
      height: 66px;
      margin-top: 7px;
      justify-content: flex-end;
      padding-right: 4px;
    }
    .fab {
      width: 50px;
      height: 50px;
      border-radius: 50%;
      background: #3f51b5;
      color: #fff;
      font: 700 15px/48px "Liberation Sans", sans-serif;
      text-align: center;
    }
    .dashed {
      width: 26px;
      height: 86px;
      flex: none;
      margin: 7px 0 0 133px;
      border: 1px dashed #4527a0;
    }
    .bottom-nav {
      width: 294px;
      height: 27px;
      flex: none;
      margin: 7px 0 0 -3px;
      background: #000;
      display: flex;
    }
    .bottom-nav svg {
      flex: 1;
      height: 24px;
      margin-top: 1px;
    }
    .hw {
      color: #fff;
    }
    .hg {
      color: #6a6a6a;
    }
    .arrow {
      position: absolute;
      width: 32px;
      height: 32px;
      border-radius: 50%;
      background: rgba(244, 244, 244, 0.9);
      color: #b8b8b8;
      display: flex;
      align-items: center;
      justify-content: center;
    }
    .a-l {
      left: 0;
      top: 261px;
      padding-right: 2px;
    }
    .a-r {
      left: 435px;
      top: 261px;
    }
    .vbar {
      position: absolute;
      left: 460px;
      top: 67px;
      width: 6px;
      height: 351px;
      background: #a8a8a8;
    }

    .tree {
      width: 300px;
      display: flex;
      flex-direction: column;
      border-right: 2px solid #e0e0e0;
    }
    .t-head {
      padding-left: 5px;
      border-bottom: 0;
      box-shadow: 0 2px 4px rgba(0, 0, 0, 0.15);
      position: relative;
      z-index: 1;
    }
    .select.all {
      width: 205px;
      gap: 5px;
      padding: 0;
    }
    .t-edit {
      margin-left: 21px;
      color: #666;
    }
    .t-del {
      margin-left: 16px;
      color: #666;
    }
    .t-body {
      flex: 1;
      position: relative;
      overflow: hidden;
      min-height: 0;
    }
    .t-list {
      width: 293px;
      height: 545px;
      overflow: hidden;
      padding-top: 0.1px;
      margin-top: -31px;
    }
    .node {
      position: relative;
      width: 210px;
      height: 40px;
      margin: 8px 0;
      display: flex;
      align-items: center;
      background: #fff;
      border: 1px solid #e0e0e0;
      border-radius: 5px;
      font-size: 15px;
      letter-spacing: -0.15px;
      white-space: nowrap;
    }
    .nic {
      width: 43px;
      display: flex;
      justify-content: center;
      padding-left: 5px;
      flex: none;
    }
    .l0 {
      margin-left: 52px;
    }
    .l1 {
      margin-left: 68px;
    }
    .head {
      margin: 10px 0 10px 70px;
    }
    .l2 {
      margin-left: 84px;
    }
    .hover {
      background: #eeeeee;
    }
    .picked {
      background: #d1c4f0;
      border-color: #4527a0;
    }
    .collapse {
      position: absolute;
      left: -23px;
      top: 11px;
      color: #bdbdbd;
    }
    .a-t {
      left: 266px;
      top: 225px;
    }
    .tbar-v {
      position: absolute;
      left: 293px;
      top: 169px;
      width: 6px;
      height: 238px;
      background: #a8a8a8;
    }
    .tbar-h {
      position: absolute;
      left: 13px;
      top: 507px;
      width: 279px;
      height: 6px;
      background: #a8a8a8;
    }

    .props {
      flex: 1;
      display: flex;
      flex-direction: column;
    }
    .pr-head {
      padding-left: 16px;
    }
    .pr-tab {
      height: 41px;
      flex: none;
      display: flex;
      align-items: center;
      padding-left: 20px;
      margin-right: 2px;
      font-size: 14px;
      letter-spacing: -0.2px;
      border-bottom: 2px solid #e4e4e4;
    }
    .pr-body {
      padding: 12px 17px;
      display: flex;
      flex-direction: column;
      gap: 25px;
    }
    .field {
      position: relative;
      width: 262px;
      height: 41px;
      display: flex;
      border: 1px solid #666;
      border-radius: 4px;
      color: #222;
    }
    .legend {
      position: absolute;
      left: 9px;
      top: -9px;
      padding: 0 5px 0 6px;
      background: #fff;
      font-size: 13px;
      line-height: 15px;
    }
    .fval {
      flex: 1;
      display: flex;
      align-items: center;
      padding-left: 5px;
      font-size: 14px;
      letter-spacing: -0.1px;
    }
    .fbtn {
      width: 40px;
      display: flex;
      align-items: center;
      justify-content: center;
    }
    .fbtn.first {
      border-left: 1px solid #666;
    }
    .fbtn.active {
      background: #4527a0;
      color: #fff;
    }
    .check {
      display: flex;
      align-items: center;
      gap: 18px;
      font-size: 15px;
      color: #333;
      margin-top: -7px;
    }
    .box {
      width: 16px;
      height: 16px;
      border-radius: 2px;
      background: #4527a0;
      display: flex;
      align-items: center;
      justify-content: center;
    }

    .taskbar {
      height: 40px;
      flex: none;
      display: flex;
      align-items: center;
      background: linear-gradient(90deg, #211d1c 0, #1c1a18 35%, #0f1b26 50%, #101b26 100%);
      color: #fff;
    }
    .start {
      width: 48px;
      height: 100%;
      display: flex;
      align-items: center;
      justify-content: center;
    }
    .tsearch {
      width: 344px;
      height: 100%;
      background: #f1f1f1;
      border-top: 1px solid #c8c8c8;
      display: flex;
      align-items: center;
      color: #222;
      font: 14px "Noto Sans", sans-serif;
      padding-left: 9px;
    }
    .cortana {
      width: 22px;
      height: 22px;
      border-radius: 50%;
      border: 3px solid #111;
      flex: none;
    }
    .ts-text {
      margin-left: 9px;
      white-space: nowrap;
      letter-spacing: -0.05px;
    }
    .mic {
      margin-left: auto;
      margin-right: 13px;
    }
    .apps {
      display: flex;
      height: 100%;
    }
    .app {
      width: 49px;
      height: 100%;
      display: flex;
      align-items: center;
      justify-content: center;
      border-bottom: 2px solid transparent;
    }
    .taskview {
      width: 50px;
    }
    .app.run {
      border-bottom-color: #f3b8a2;
    }
    .ff {
      background: #4a4a4a;
    }
    .tray {
      display: flex;
      align-items: center;
      height: 100%;
      margin-left: auto;
      width: 278px;
      font: 12px "Noto Sans", sans-serif;
    }
    .help {
      position: relative;
      width: 23px;
      height: 23px;
      flex: none;
      border-radius: 50%;
      background: #fff;
      border: 3px solid #2a95e0;
      color: #1c7fd0;
      font: 700 15px/17px "Liberation Sans", sans-serif;
      text-align: center;
    }
    .help i {
      position: absolute;
      right: -5px;
      bottom: -5px;
      width: 11px;
      height: 11px;
      border-radius: 50%;
      background: #f3a31b;
      color: #fff;
      font: 700 8px/11px "Liberation Sans", sans-serif;
    }
    .t1 {
      margin-left: 10px;
    }
    .t2 {
      margin-left: 9px;
    }
    .t3 {
      margin-left: 9px;
    }
    .t4 {
      margin-left: 10px;
    }
    .lang {
      margin-left: 8px;
    }
    .time {
      width: 70px;
      margin-left: 3px;
      text-align: center;
      line-height: 20px;
      font-size: 11.500px;
      letter-spacing: -0.5px;
    }
    .t5 {
      margin-left: 8px;
    }
  `;
}
